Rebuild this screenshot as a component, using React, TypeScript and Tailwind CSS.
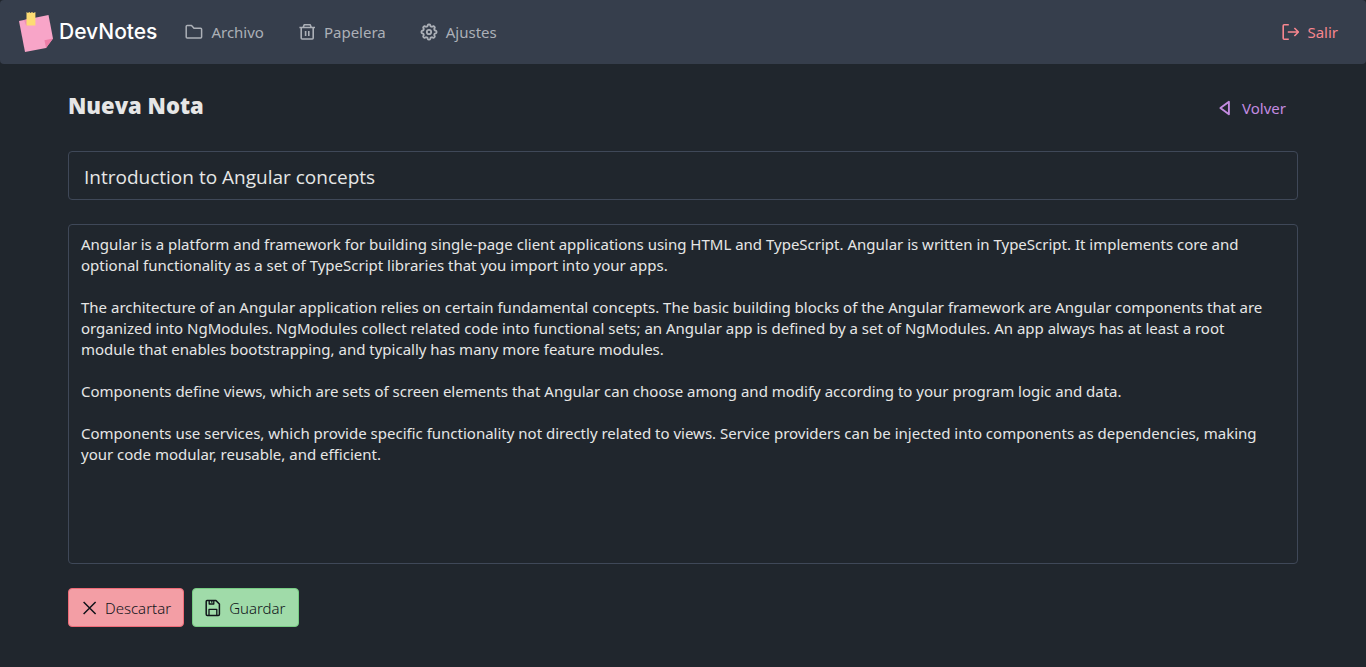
import { useState, type ReactNode } from "react";

const NOTE_BODY = `Angular is a platform and framework for building single-page client applications using HTML and TypeScript. Angular is written in TypeScript. It implements core and optional functionality as a set of TypeScript libraries that you import into your apps.

The architecture of an Angular application relies on certain fundamental concepts. The basic building blocks of the Angular framework are Angular components that are organized into NgModules. NgModules collect related code into functional sets; an Angular app is defined by a set of NgModules. An app always has at least a root module that enables bootstrapping, and typically has many more feature modules.

Components define views, which are sets of screen elements that Angular can choose among and modify according to your program logic and data.

Components use services, which provide specific functionality not directly related to views. Service providers can be injected into components as dependencies, making your code modular, reusable, and efficient.`;

function Icon({ children }: { children: ReactNode }) {
  return (
    <svg
      className="size-[18px] shrink-0"
      viewBox="0 0 18 18"
      fill="none"
      stroke="currentColor"
      strokeWidth="1.5"
      strokeLinejoin="round"
      aria-hidden="true"
    >
      {children}
    </svg>
  );
}

function gearPath() {
  const points: string[] = [];
  for (let i = 0; i <= 96; i++) {
    const a = (i / 96) * Math.PI * 2;
    const r = 6.7 + 0.85 * Math.tanh(2.2 * Math.cos(8 * a));
    points.push(`${(9 + r * Math.sin(a)).toFixed(2)} ${(9 - r * Math.cos(a)).toFixed(2)}`);
  }
  return `M${points.join("L")}Z`;
}

const FolderIcon = () => (
  <Icon>
    <path d="M1.2 3.4Q1.2 2.4 2.2 2.4H6.5L9 5.2H15.6Q16.6 5.2 16.6 6.2V14.1Q16.6 15.1 15.6 15.1H2.2Q1.2 15.1 1.2 14.1Z" />
  </Icon>
);

const TrashIcon = () => (
  <Icon>
    <path
      d="M1.4 4.5H17M5.2 4.2L6.2 1.7H12.2L13.2 4.2M3.2 4.5V15.1Q3.2 16 4.1 16H14.3Q15.2 16 15.2 15.1V4.5M7.6 8V13M10.8 8V13"
      strokeWidth="1.6"
    />
  </Icon>
);

const GearIcon = () => (
  <Icon>
    <path d={gearPath()} strokeWidth="1.8" />
    <circle cx="9" cy="9" r="2.2" strokeWidth="1.8" />
  </Icon>
);

const ExitIcon = () => (
  <Icon>
    <path
      d="M7.8 1.7H3.2Q2.2 1.7 2.2 2.7V15.3Q2.2 16.3 3.2 16.3H7.8M6.8 9H17.2M13.4 5L17.4 9L13.4 13"
      strokeWidth="1.6"
    />
  </Icon>
);

const BackIcon = () => (
  <Icon>
    <path d="M12.9 2.8V15.2L4.4 9Z" strokeWidth="1.9" />
  </Icon>
);

const CrossIcon = () => (
  <Icon>
    <path d="M2.6 3L14.6 15M14.6 3L2.6 15" />
  </Icon>
);

const SaveIcon = () => (
  <Icon>
    <path d="M2 1.6H11L14.4 5V15.3Q14.4 16.4 13.3 16.4H2.3Q1.2 16.4 1.2 15.3V2.4Q1.2 1.6 2 1.6Z" />
    <path d="M4.2 1.8V5H8.8V1.8M6.8 2V3.8M4 16.2V10.3H11.8V16.2" strokeWidth="1.3" />
  </Icon>
);

function NoteLogo() {
  return (
    <svg className="h-10 w-[34px] shrink-0" viewBox="0 0 34 40" aria-hidden="true">
      <path d="M0 9L29.5 3L34 26.5L27 36L6 40Z" fill="#f8a5c8" />
      <path d="M5 8L7 13.4L16 12L15 6Z" fill="#ef8fb5" />
      <path d="M34 26.5L27 36L25.5 28.2Z" fill="#ee7da7" />
      <path d="M7.5 0L9 1L10.2 0L11.6 1L13 0L14.4 1L16.4 0V13.5H7.5Z" fill="#fddc73" />
    </svg>
  );
}

function NavLink({ icon, label }: { icon: ReactNode; label: string }) {
  return (
    <a href="#" className="flex items-center gap-2 text-[#acb0b7] hover:text-white">
      {icon}
      {label}
    </a>
  );
}

export default function App() {
  const [title, setTitle] = useState("Introduction to Angular concepts");
  const [body, setBody] = useState(NOTE_BODY);

  return (
    <div className="min-h-screen bg-[#20262d] font-['Noto_Sans','Open_Sans',sans-serif] text-[15px] leading-6 text-[#e6e6e6]">
      <nav className="flex h-16 items-center justify-between rounded bg-[#363e4c] pr-7 pl-[19px]">
        <div className="flex items-center gap-7">
          <a href="#" className="flex items-center gap-1.5 font-['Inter',sans-serif] text-[21px] font-medium text-white">
            <NoteLogo />
            DevNotes
          </a>
          <div className="flex items-center gap-[34px]">
            <NavLink icon={<FolderIcon />} label="Archivo" />
            <NavLink icon={<TrashIcon />} label="Papelera" />
            <NavLink icon={<GearIcon />} label="Ajustes" />
          </div>
        </div>
        <a href="#" className="flex items-center gap-2 text-[#f8868f]">
          <ExitIcon />
          Salir
        </a>
      </nav>

      <main className="mx-auto max-w-[1230px] pt-6 pb-10">
        <header className="flex h-9 items-start justify-between pr-3">
          <h1 className="font-['Open_Sans',sans-serif] text-[22px] leading-[34px] font-extrabold">Nueva Nota</h1>
          <a href="#" className="flex items-center gap-2 pt-2 text-[#c38be0]">
            <BackIcon />
            Volver
          </a>
        </header>

        <form className="mt-[27px] flex flex-col gap-6" onSubmit={(e) => e.preventDefault()}>
          <input
            aria-label="Título"
            value={title}
            onChange={(e) => setTitle(e.target.value)}
            className="h-[49px] w-full rounded border border-[#3f4858] bg-transparent px-[15px] pt-0.5 font-['Open_Sans',sans-serif] text-[19px] outline-none"
          />
          <textarea
            aria-label="Contenido"
            value={body}
            onChange={(e) => setBody(e.target.value)}
            className="block h-[340px] w-full resize-none rounded border border-[#3f4858] bg-transparent py-[9px] pr-5 pl-3 leading-[21px] outline-none"
          />
          <div className="flex gap-2 font-['Noto_Sans',sans-serif] font-light text-[#10141a]">
            <button
              type="button"
              className="flex h-[39px] items-center gap-1.5 rounded border border-[#ee6b77] bg-[#f39ea5] px-3"
            >
              <CrossIcon />
              Descartar
            </button>
            <button
              type="submit"
              className="flex h-[39px] items-center gap-1.5 rounded border border-[#77cc83] bg-[#a0dba9] px-3"
            >
              <SaveIcon />
              Guardar
            </button>
          </div>
        </form>
      </main>
    </div>
  );
}
